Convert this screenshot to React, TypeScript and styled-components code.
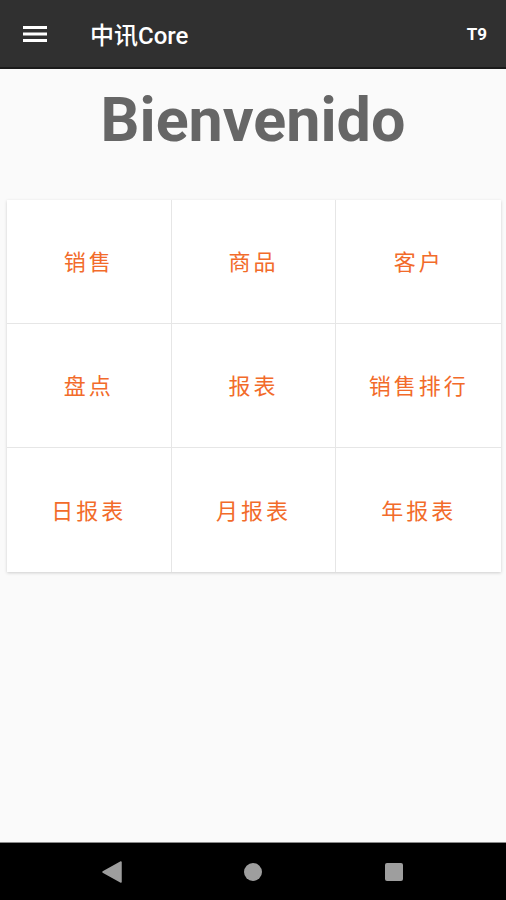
import styled, { createGlobalStyle } from 'styled-components';

const GlobalStyle = createGlobalStyle`
  html, body {
    margin: 0;
    padding: 0;
    background: #fafafa;
  }
  body {
    font-family: Roboto, "Noto Sans CJK SC", sans-serif;
  }
`;

const menuItems = ['销售', '商品', '客户', '盘点', '报表', '销售排行', '日报表', '月报表', '年报表'];

const App: React.FC = () => {
  return (
    <Screen>
      <GlobalStyle />
      <TopBar>
        <MenuButton aria-label="menu">
          <svg width="24" height="18" viewBox="0 0 24 18">
            <rect x="0" y="1" width="24" height="3" fill="#fff" />
            <rect x="0" y="7.5" width="24" height="3" fill="#fff" />
            <rect x="0" y="14" width="24" height="3" fill="#fff" />
          </svg>
        </MenuButton>
        <AppTitle>中讯Core</AppTitle>
        <ModeLabel>T9</ModeLabel>
      </TopBar>
      <Content>
        <Welcome>Bienvenido</Welcome>
        <Grid>
          {menuItems.map((item) => (
            <Cell key={item}>{item}</Cell>
          ))}
        </Grid>
      </Content>
      <NavBar>
        <svg width="20" height="22" viewBox="0 0 20 22">
          <path d="M19 1 L19 21 L1 11 Z" fill="#9e9e9e" stroke="#9e9e9e" strokeWidth="1.5" strokeLinejoin="round" />
        </svg>
        <svg width="20" height="20" viewBox="0 0 20 20">
          <circle cx="10" cy="10" r="9" fill="#9e9e9e" />
        </svg>
        <svg width="20" height="20" viewBox="0 0 20 20">
          <rect x="1" y="1" width="18" height="18" rx="2" fill="#9e9e9e" />
        </svg>
      </NavBar>
    </Screen>
  );
};

const Screen = styled.div`
  width: 506px;
  height: 900px;
  display: flex;
  flex-direction: column;
  background: #fafafa;
  overflow: hidden;
`;

const TopBar = styled.header`
  height: 67px;
  flex-shrink: 0;
  background: #303030;
  border-bottom: 2px solid #1a1a1a;
  display: flex;
  align-items: center;
  padding: 0 19px 0 23px;
  color: #fff;
`;

const MenuButton = styled.div`
  width: 24px;
  height: 18px;
  display: flex;
`;

const AppTitle = styled.h1`
  margin: 0 0 0 43px;
  font-family: Roboto, "Noto Sans CJK SC", sans-serif;
  font-size: 24px;
  font-weight: 500;
  flex: 1;
`;

const ModeLabel = styled.span`
  font-family: Roboto, sans-serif;
  font-size: 17px;
  font-weight: 700;
`;

const Content = styled.main`
  flex: 1;
  display: flex;
  flex-direction: column;
  align-items: center;
  padding: 0 5px 0 7px;
`;

const Welcome = styled.div`
  margin-top: 15px;
  padding-right: 2px;
  font-family: Roboto, sans-serif;
  font-weight: 700;
  font-size: 61px;
  line-height: 72px;
  color: #666666;
`;

const Grid = styled.div`
  margin-top: 44px;
  align-self: stretch;
  display: grid;
  grid-template-columns: repeat(3, 1fr);
  grid-auto-rows: 124px;
  background: #fff;
  box-shadow: 0 1px 3px rgba(0, 0, 0, 0.18);
`;

const Cell = styled.div`
  display: flex;
  align-items: center;
  justify-content: center;
  padding-bottom: 3px;
  border-right: 1px solid #e6e6e6;
  border-bottom: 1px solid #e6e6e6;
  color: #f26b2a;
  font-family: "Noto Sans CJK SC", sans-serif;
  font-size: 22px;
  font-weight: 400;
  letter-spacing: 3px;

  &:nth-child(3n) {
    border-right: none;
  }
  &:nth-last-child(-n + 3) {
    border-bottom: none;
  }
`;

const NavBar = styled.nav`
  height: 57px;
  flex-shrink: 0;
  background: #000;
  border-top: 1px solid #8a8a8a;
  display: flex;
  align-items: center;
  justify-content: center;
  gap: 121px;
`;

export default App;
